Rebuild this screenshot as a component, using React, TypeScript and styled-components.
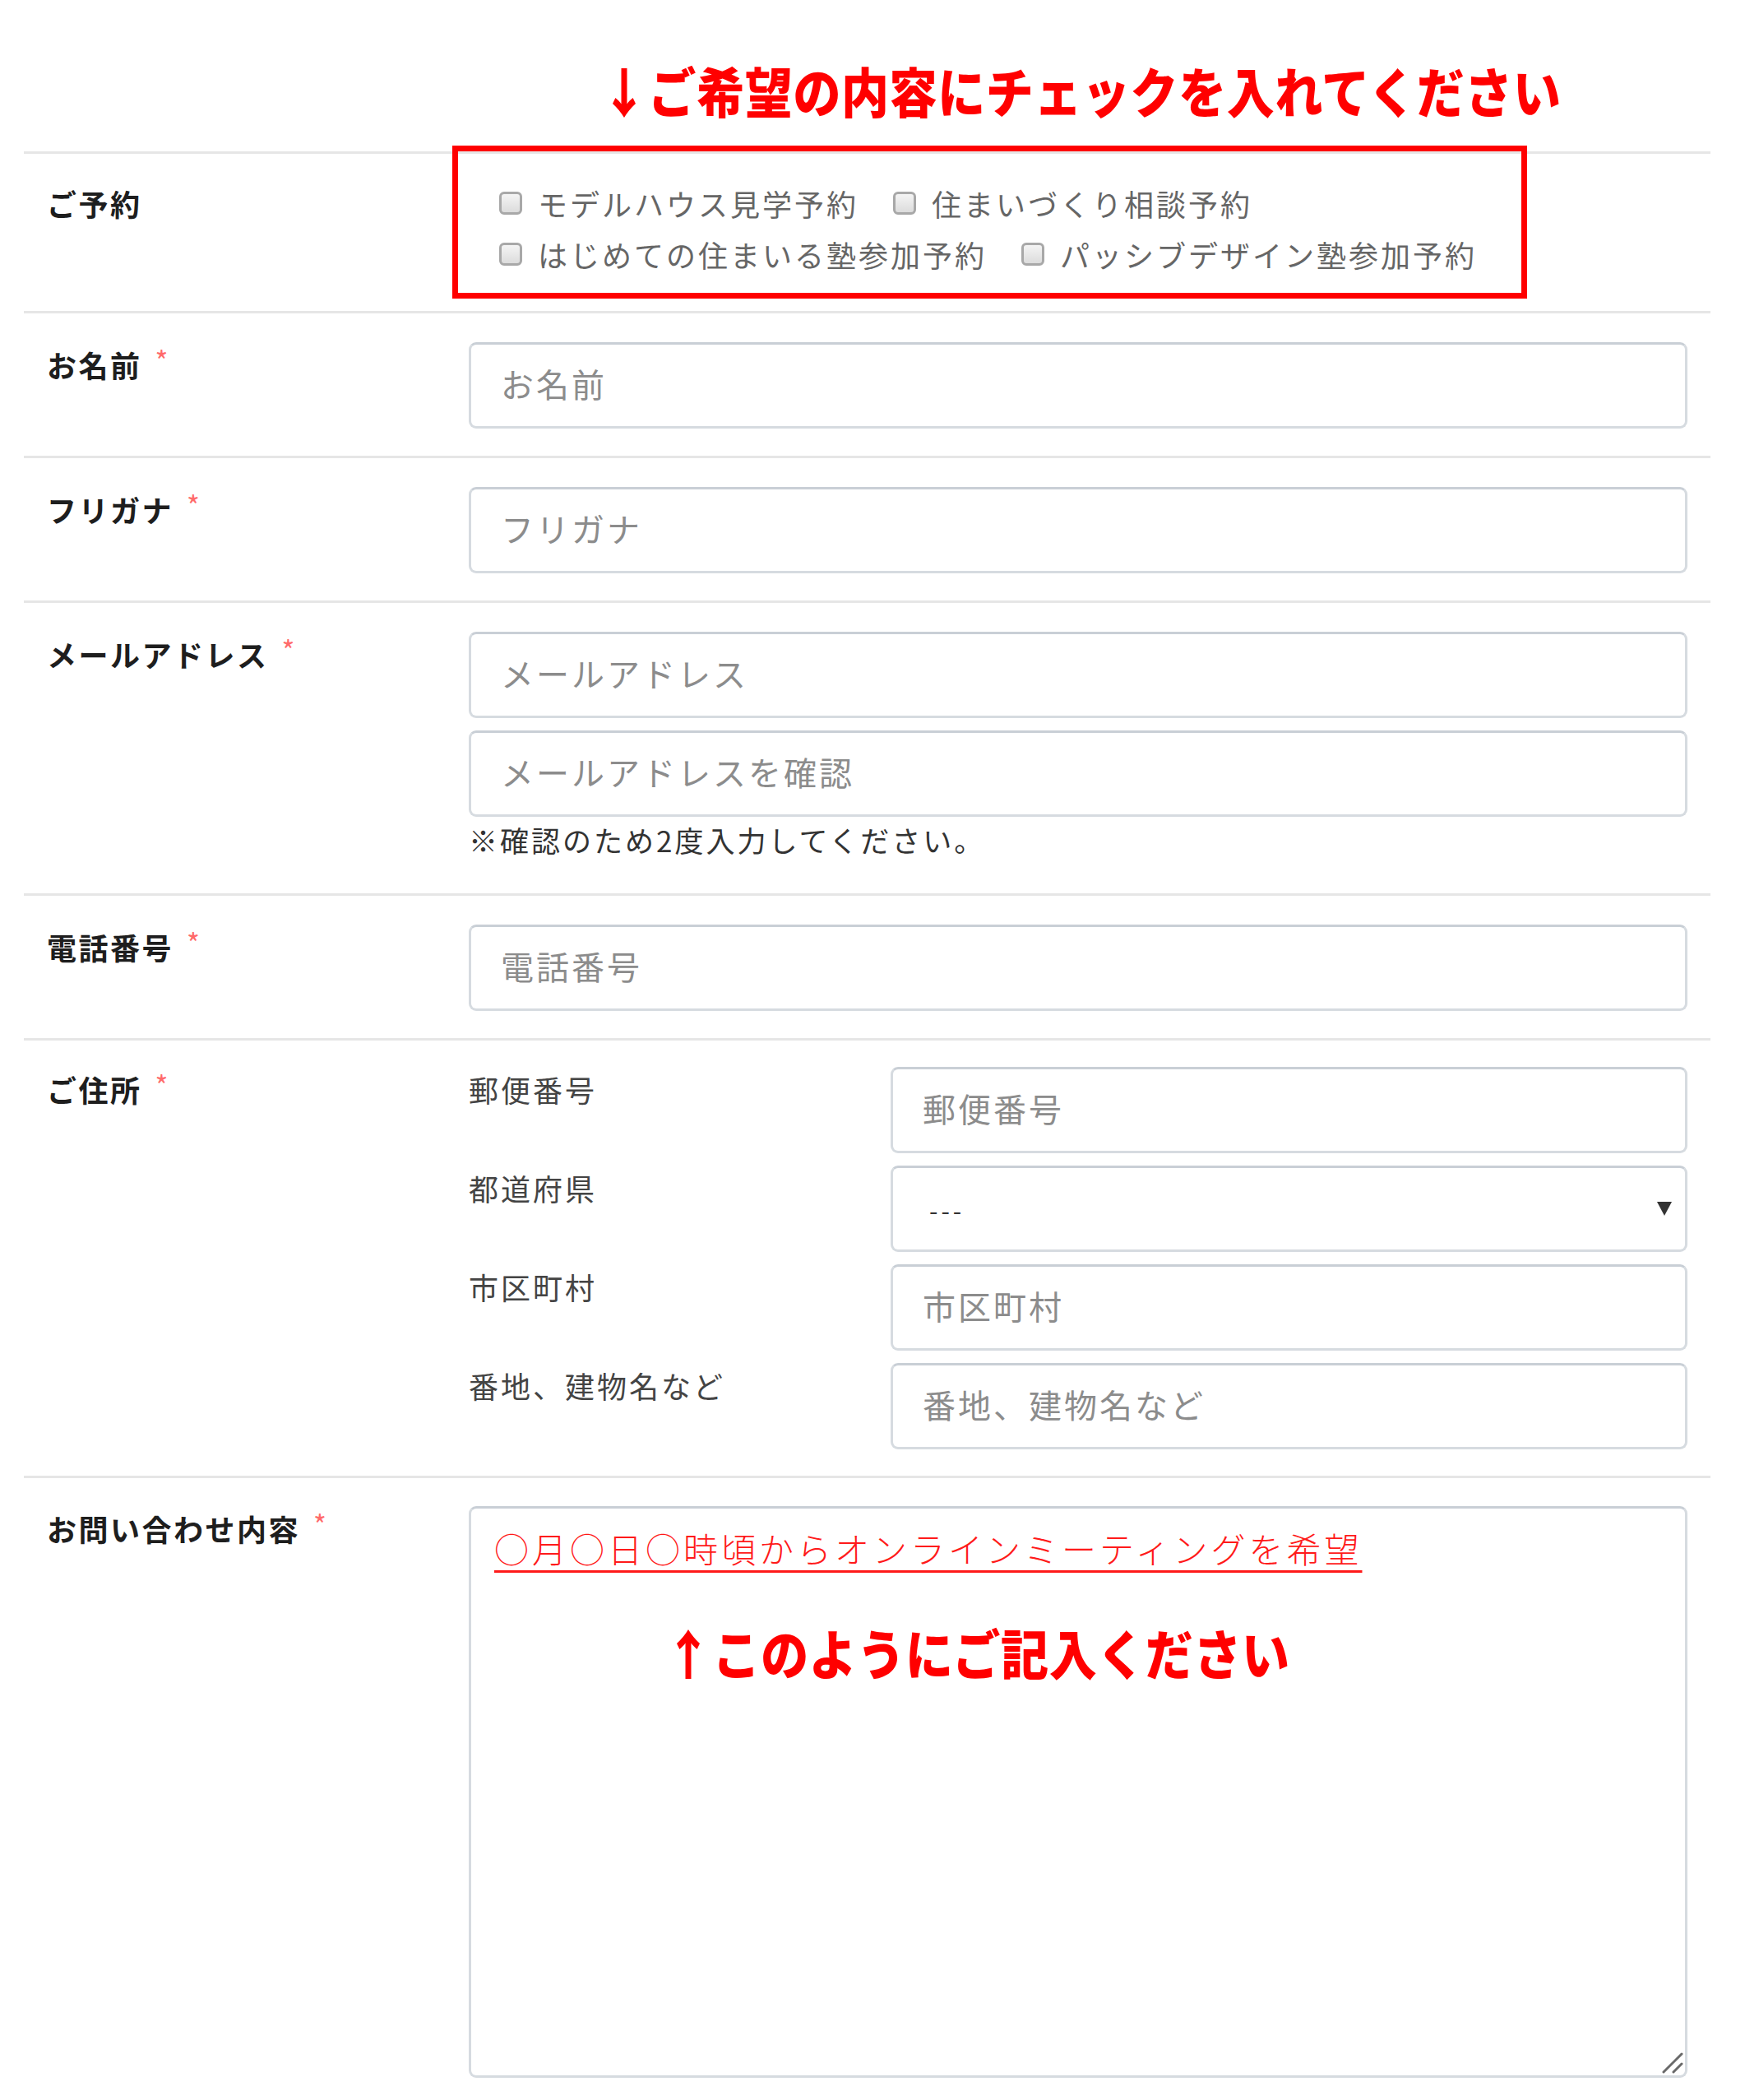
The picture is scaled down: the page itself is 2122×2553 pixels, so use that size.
import * as React from 'react';
import styled, { createGlobalStyle } from 'styled-components';

const FONT = `'Noto Sans CJK JP', 'Noto Sans', sans-serif`;

const GlobalStyle = createGlobalStyle`
  html, body {
    margin: 0;
    padding: 0;
    background: #fff;
  }
  body {
    font-family: ${FONT};
    color: #222;
  }
`;

/*************************************************************************/

const Page = styled.div`
  width: 2122px;
  box-sizing: border-box;
  padding: 0 42px 26px 29px;
`;

const Heading = styled.div`
  box-sizing: border-box;
  height: 184px;
  padding: 80px 0 0 701px;
  line-height: 58px;
`;

// the two red notes use the same heavy, slightly tall lettering
const Shout = styled.span`
  display: inline-block;
  font-size: 58px;
  line-height: 58px;
  font-weight: 900;
  letter-spacing: 0.6px;
  color: #ff0000;
  white-space: nowrap;
  transform: scaleY(1.12);
  transform-origin: 50% 50%;
`;

const Row = styled.div<{ $top?: number; $bottom?: number }>`
  display: grid;
  grid-template-columns: 541px 1fr;
  padding: ${(p) => p.$top ?? 35}px 28px ${(p) => p.$bottom ?? 33}px 0;
  border-top: 3px solid #e6e6e6;
`;

const Label = styled.div<{ $lh?: number }>`
  padding-left: 28px;
  font-size: 36px;
  line-height: ${(p) => p.$lh ?? 54}px;
  font-weight: 700;
  letter-spacing: 2.5px;
  color: #1e1e1e;
  white-space: nowrap;
`;

const Req = styled.span`
  display: inline-block;
  margin-left: 16px;
  margin-top: 5px;
  font-size: 34px;
  line-height: 1;
  vertical-align: top;
  color: #ff6a6a;
  font-weight: 400;
`;

const Field = styled.div`
  display: flex;
  flex-direction: column;
  gap: 15px;
  min-width: 0;
`;

/*************************************************************************/

const ChoiceArea = styled.div`
  position: relative;
  padding-left: 37px;
`;

const RedFrame = styled.div`
  position: absolute;
  left: -20px;
  top: -39px;
  width: 1307px;
  height: 186px;
  box-sizing: border-box;
  border: 7px solid #ff0000;
  pointer-events: none;
`;

const ChoiceLine = styled.div`
  display: flex;
  align-items: center;
  gap: 42px;
  height: 62px;
`;

const Choice = styled.label`
  display: flex;
  align-items: center;
  gap: 19px;
  font-size: 36px;
  letter-spacing: 3px;
  color: #666;
  white-space: nowrap;
`;

const Check = styled.input.attrs({ type: 'checkbox' })`
  appearance: none;
  margin: 0;
  width: 28px;
  height: 28px;
  box-sizing: border-box;
  border: 3px solid #a8a8a8;
  border-radius: 6px;
  background: linear-gradient(#f4f4f4, #dcdcdc);
  flex: none;
`;

/*************************************************************************/

const TextInput = styled.input`
  box-sizing: border-box;
  width: 100%;
  height: 105px;
  margin: 0;
  padding: 0 0 6px 36px;
  border: 3px solid #d6dbe0;
  border-top-color: #c9cfd6;
  border-radius: 9px;
  background: #fff;
  font-family: ${FONT};
  font-size: 40px;
  letter-spacing: 3px;
  color: #333;
  outline: none;
  &::placeholder {
    color: #8c8c8c;
  }
`;

const Note = styled.div`
  margin-top: -12px;
  margin-bottom: 7px;
  font-size: 35px;
  line-height: 50px;
  letter-spacing: 3px;
  color: #333;
  white-space: nowrap;
`;

const AddressGrid = styled.div`
  display: grid;
  grid-template-columns: 513px 1fr;
  row-gap: 15px;
`;

const SubLabel = styled.div`
  font-size: 36px;
  line-height: 54px;
  letter-spacing: 3px;
  color: #444;
  white-space: nowrap;
`;

const SelectWrap = styled.div`
  position: relative;
`;

const Select = styled.select`
  box-sizing: border-box;
  width: 100%;
  height: 105px;
  margin: 0;
  padding: 0 0 0 44px;
  appearance: none;
  border: 3px solid #d6dbe0;
  border-top-color: #c9cfd6;
  border-radius: 9px;
  background: #fff;
  font-family: ${FONT};
  font-size: 30px;
  letter-spacing: 4px;
  color: #333;
  outline: none;
`;

const Arrow = styled.svg`
  position: absolute;
  right: 18px;
  top: 42px;
  width: 20px;
  height: 20px;
  pointer-events: none;
`;

const AreaWrap = styled.div`
  position: relative;
`;

const TextArea = styled.textarea`
  display: block;
  box-sizing: border-box;
  width: 100%;
  height: 695px;
  margin: 0;
  border: 3px solid #d6dbe0;
  border-top-color: #c9cfd6;
  border-radius: 9px;
  background: #fff;
  font-family: ${FONT};
  font-size: 40px;
  resize: none;
  outline: none;
`;

const Grip = styled.svg`
  position: absolute;
  right: 4px;
  bottom: 4px;
  width: 28px;
  height: 28px;
  pointer-events: none;
`;

const Example = styled.div`
  position: absolute;
  left: 31px;
  top: 22px;
  pointer-events: none;
`;

const ExampleLine = styled.div`
  display: inline-block;
  font-size: 42px;
  line-height: 58px;
  font-weight: 300;
  letter-spacing: 4px;
  color: #ff1a1a;
  white-space: nowrap;
  text-decoration: underline;
  text-decoration-thickness: 3px;
  text-underline-offset: 9px;
`;

const Hint = styled.div`
  margin: 68px 0 0 207px;
  line-height: 58px;
`;

/*************************************************************************/

const choices = [
  ['モデルハウス見学予約', '住まいづくり相談予約'],
  ['はじめての住まいる塾参加予約', 'パッシブデザイン塾参加予約']
];

const address = [
  { label: '郵便番号', ph: '郵便番号' },
  { label: '都道府県', select: true },
  { label: '市区町村', ph: '市区町村' },
  { label: '番地、建物名など', ph: '番地、建物名など' }
];

const Required = () => <Req>*</Req>;

export default function App() {
  return (
    <>
      <GlobalStyle />
      <Page>
        <Heading>
          <Shout>↓ご希望の内容にチェックを入れてください</Shout>
        </Heading>

        <Row $top={29} $bottom={38}>
          <Label $lh={62}>ご予約</Label>
          <Field>
            <ChoiceArea>
              <RedFrame />
              {choices.map((line, i) => (
                <ChoiceLine key={i}>
                  {line.map((c) => (
                    <Choice key={c}>
                      <Check />
                      {c}
                    </Choice>
                  ))}
                </ChoiceLine>
              ))}
            </ChoiceArea>
          </Field>
        </Row>

        <Row>
          <Label>
            お名前
            <Required />
          </Label>
          <Field>
            <TextInput placeholder="お名前" />
          </Field>
        </Row>

        <Row>
          <Label>
            フリガナ
            <Required />
          </Label>
          <Field>
            <TextInput placeholder="フリガナ" />
          </Field>
        </Row>

        <Row>
          <Label>
            メールアドレス
            <Required />
          </Label>
          <Field>
            <TextInput placeholder="メールアドレス" />
            <TextInput placeholder="メールアドレスを確認" />
            <Note>※確認のため2度入力してください。</Note>
          </Field>
        </Row>

        <Row>
          <Label>
            電話番号
            <Required />
          </Label>
          <Field>
            <TextInput placeholder="電話番号" />
          </Field>
        </Row>

        <Row $top={32} $bottom={32}>
          <Label>
            ご住所
            <Required />
          </Label>
          <AddressGrid>
            {address.map((a) => (
              <React.Fragment key={a.label}>
                <SubLabel>{a.label}</SubLabel>
                {a.select ? (
                  <SelectWrap>
                    <Select defaultValue="">
                      <option value="">---</option>
                    </Select>
                    <Arrow viewBox="0 0 20 20">
                      <path d="M1 2 L19 2 L10 19 Z" fill="#333" />
                    </Arrow>
                  </SelectWrap>
                ) : (
                  <TextInput placeholder={a.ph} />
                )}
              </React.Fragment>
            ))}
          </AddressGrid>
        </Row>

        <Row $top={34} $bottom={0}>
          <Label>
            お問い合わせ内容
            <Required />
          </Label>
          <AreaWrap>
            <TextArea />
            <Grip viewBox="0 0 28 28">
              <path d="M3 25 L25 3 M15 25 L25 15" stroke="#6a6a6a" strokeWidth="3" strokeLinecap="round" />
            </Grip>
            <Example>
              <ExampleLine>○月○日○時頃からオンラインミーティングを希望</ExampleLine>
              <Hint>
                <Shout>↑このようにご記入ください</Shout>
              </Hint>
            </Example>
          </AreaWrap>
        </Row>
      </Page>
    </>
  );
}
